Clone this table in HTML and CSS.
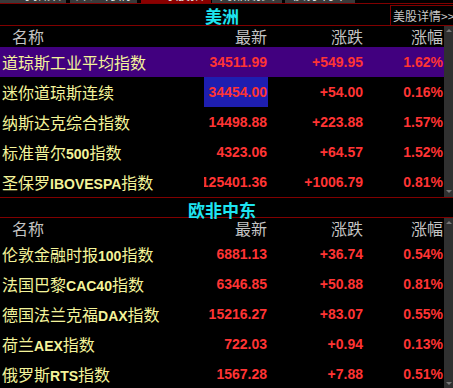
FILE: index.html
```html
<!DOCTYPE html>
<html lang="zh-CN">
<head>
    <meta charset="UTF-8">
    <title>全球指数</title>
    <link rel="stylesheet" href="styles.css">
</head>
<body>
    <div class="tabs">
        <div class="tab"><span>全球指数</span></div>
        <div class="tab"><span>外汇行情</span></div>
        <div class="tab active"><span>全球股指</span></div>
        <div class="tab"><span>商品期货</span></div>
        <div class="tab"><span>债券利率</span></div>
    </div>

    <!-- 美洲 -->
    <div class="region-bar first">
        <span class="region-title">美洲</span>
        <a class="region-more">美股详情&gt;&gt;</a>
    </div>
    <div class="region-body">
        <div class="quote-table">
            <div class="quote-row head">
                <div class="col-name">名称</div>
                <div class="col-num">最新</div>
                <div class="col-num">涨跌</div>
                <div class="col-num">涨幅</div>
            </div>
            <div class="quote-row selected">
                <div class="col-name">道琼斯工业平均指数</div>
                <div class="col-num">34511.99</div>
                <div class="col-num">+549.95</div>
                <div class="col-num">1.62%</div>
            </div>
            <div class="quote-row">
                <div class="col-name">迷你道琼斯连续</div>
                <div class="col-num cursor">34454.00</div>
                <div class="col-num">+54.00</div>
                <div class="col-num">0.16%</div>
            </div>
            <div class="quote-row">
                <div class="col-name">纳斯达克综合指数</div>
                <div class="col-num">14498.88</div>
                <div class="col-num">+223.88</div>
                <div class="col-num">1.57%</div>
            </div>
            <div class="quote-row">
                <div class="col-name">标准普尔<b>500</b>指数</div>
                <div class="col-num">4323.06</div>
                <div class="col-num">+64.57</div>
                <div class="col-num">1.52%</div>
            </div>
            <div class="quote-row">
                <div class="col-name">圣保罗<b>IBOVESPA</b>指数</div>
                <div class="col-num">125401.36</div>
                <div class="col-num">+1006.79</div>
                <div class="col-num">0.81%</div>
            </div>
        </div>
        <div class="scrollbar">
            <i class="arrow-up"></i>
            <i class="arrow-down"></i>
        </div>
    </div>

    <!-- 欧非中东 -->
    <div class="region-bar">
        <span class="region-title">欧非中东</span>
    </div>
    <div class="region-body">
        <div class="quote-table">
            <div class="quote-row head">
                <div class="col-name">名称</div>
                <div class="col-num">最新</div>
                <div class="col-num">涨跌</div>
                <div class="col-num">涨幅</div>
            </div>
            <div class="quote-row">
                <div class="col-name">伦敦金融时报<b>100</b>指数</div>
                <div class="col-num">6881.13</div>
                <div class="col-num">+36.74</div>
                <div class="col-num">0.54%</div>
            </div>
            <div class="quote-row">
                <div class="col-name">法国巴黎<b>CAC40</b>指数</div>
                <div class="col-num">6346.85</div>
                <div class="col-num">+50.88</div>
                <div class="col-num">0.81%</div>
            </div>
            <div class="quote-row">
                <div class="col-name">德国法兰克福<b>DAX</b>指数</div>
                <div class="col-num">15216.27</div>
                <div class="col-num">+83.07</div>
                <div class="col-num">0.55%</div>
            </div>
            <div class="quote-row">
                <div class="col-name">荷兰<b>AEX</b>指数</div>
                <div class="col-num">722.03</div>
                <div class="col-num">+0.94</div>
                <div class="col-num">0.13%</div>
            </div>
            <div class="quote-row">
                <div class="col-name">俄罗斯<b>RTS</b>指数</div>
                <div class="col-num">1567.28</div>
                <div class="col-num">+7.88</div>
                <div class="col-num">0.51%</div>
            </div>
        </div>
        <div class="scrollbar">
            <i class="arrow-up"></i>
            <i class="arrow-down"></i>
        </div>
    </div>
</body>
</html>
```

FILE: styles.css
```css
html, body {
    margin: 0;
    padding: 0;
    background: #000;
    overflow: hidden;
}

body {
    width: 453px;
    font-family: "Noto Sans CJK SC", "Liberation Sans", sans-serif;
}

/* tab strip, mostly cut off at the top */
.tabs {
    display: flex;
    height: 3px;
    overflow: hidden;
}

.tab {
    background: #3a3a3a;
    width: 66px;
    margin-right: 4px;
    overflow: hidden;
    text-align: center;
}

.tab:nth-child(2) { width: 67px; }
.tab.active { background: #8a0000; width: 70px; margin-right: 1px; }
.tab:nth-child(4) { width: 70px; margin-right: 3px; }
.tab:nth-child(5) { width: 70px; }

.tab span {
    display: block;
    margin-top: -15px;
    font-size: 14px;
    line-height: 16px;
    color: #e0e0e0;
}

/* region header */
.region-bar {
    position: relative;
    height: 19px;
    border-top: 1px solid #800000;
    border-bottom: 1px solid #800000;
    padding-right: 9px;
    text-align: center;
}

.region-bar.first {
    height: 21px;
}

.region-title {
    color: #1ee4f0;
    font-size: 17px;
    font-weight: bold;
    line-height: 19px;
}

.region-bar.first .region-title {
    line-height: 21px;
}

.region-more {
    position: absolute;
    right: 0;
    top: 1px;
    bottom: 0;
    width: 60px;
    padding-left: 2px;
    border-top: 1px solid #800000;
    border-left: 1px solid #800000;
    color: #c8c8c8;
    font-size: 12px;
    line-height: 20px;
    white-space: nowrap;
    overflow: hidden;
    text-align: left;
}

/* table + scrollbar */
.region-body {
    display: flex;
}

.quote-table {
    flex: 1;
}

.quote-row {
    display: grid;
    grid-template-columns: 204px 64px 96px 80px;
    height: 30px;
    align-items: stretch;
}

.quote-row.head {
    height: 21px;
}

.quote-row.selected {
    background: #41007f;
}

.col-name {
    padding-left: 2px;
    color: #f4f49a;
    font-size: 16px;
    line-height: 30px;
    white-space: nowrap;
    overflow: hidden;
}

.col-name b {
    font-family: "Liberation Sans", sans-serif;
    font-size: 14px;
    font-weight: bold;
}

.col-num {
    display: flex;
    justify-content: flex-end;
    align-items: center;
    padding-right: 1px;
    overflow: hidden;
    white-space: nowrap;
    color: #ff3434;
    font-family: "Liberation Sans", sans-serif;
    font-size: 14px;
    font-weight: bold;
}

.col-num.cursor {
    background: #1e1eb0;
}

.head .col-name,
.head .col-num {
    color: #c4c4c4;
    font-family: "Noto Sans CJK SC", sans-serif;
    font-size: 16px;
    font-weight: normal;
    line-height: 21px;
}

.head .col-name {
    padding-left: 12px;
}

.scrollbar {
    width: 9px;
    background: #303030;
    display: flex;
    flex-direction: column;
    justify-content: space-between;
    align-items: center;
    padding: 3px 0 4px;
}

.arrow-up,
.arrow-down {
    width: 0;
    height: 0;
    border-left: 3px solid transparent;
    border-right: 3px solid transparent;
}

.arrow-up {
    border-bottom: 3px solid #777;
}

.arrow-down {
    border-top: 3px solid #777;
}
```
